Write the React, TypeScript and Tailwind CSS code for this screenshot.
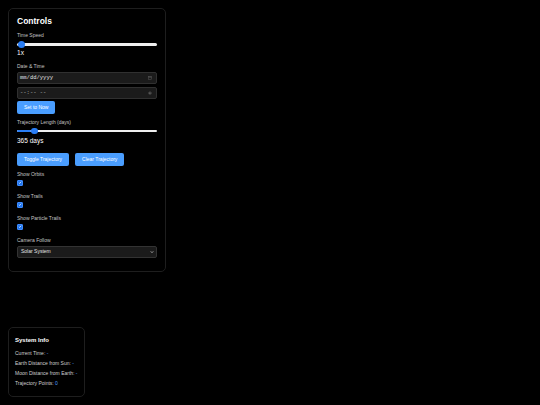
import React, { useState } from 'react';

const font = { fontFamily: '"Liberation Sans", Arial, sans-serif' };

function Slider({ pct }: { pct: number }) {
  return (
    <div className="relative h-[6.5px] w-full">
      <div className="absolute left-0 right-0 top-[2px] h-[2.5px] rounded-full bg-[#efefef]" />
      <div className="absolute left-0 top-[2px] h-[2.5px] rounded-full bg-[#2a7ef5]" style={{ width: `${pct}%` }} />
      <div
        className="absolute top-0 h-[6.5px] w-[6.5px] rounded-full bg-[#2a7ef5]"
        style={{ left: `calc(${pct}% * 0.955 + 1px)` }}
      />
    </div>
  );
}

function Label({ children }: { children: React.ReactNode }) {
  return <div className="text-[5px] leading-none text-[#c4c4c4]">{children}</div>;
}

function Check() {
  return (
    <div className="flex h-[6px] w-[6px] items-center justify-center rounded-[1px] border-[0.5px] border-[#3d8bff] bg-[#1f74ec]">
      <svg viewBox="0 0 10 10" className="h-[5px] w-[5px]">
        <path d="M2 5.2 L4.2 7.3 L8 2.8" fill="none" stroke="#fff" strokeWidth="1.8" />
      </svg>
    </div>
  );
}

function Btn({ children }: { children: React.ReactNode }) {
  return (
    <button className="h-[13px] rounded-[2px] bg-[#4a9eff] px-[7px] text-[5px] leading-none text-white">
      {children}
    </button>
  );
}

export default function App() {
  const [speed] = useState(1);
  const [days] = useState(365);

  return (
    <div className="relative h-[405px] w-[540px] overflow-hidden bg-black text-white" style={font}>
      {/* controls overlay */}
      <div className="absolute left-[8px] top-[8px] flex w-[158px] flex-col rounded-[5px] border border-[#1e1e1e] bg-black/80 px-[8px] pb-[13px] pt-[8px]">
        <div className="text-[8.5px] font-bold leading-none">Controls</div>

        <div className="mt-[7px]">
          <Label>Time Speed</Label>
        </div>
        <div className="mt-[3.5px]">
          <Slider pct={0} />
        </div>
        <div className="mt-[2px] text-[6.5px] leading-none">{speed}x</div>

        <div className="mt-[8px]">
          <Label>Date &amp; Time</Label>
        </div>
        <div className="mt-[2.5px] flex h-[12px] items-center justify-between rounded-[2px] border border-[#303030] bg-[#1b1b1b] pl-[2px] pr-[4px]">
          <span className="text-[5.5px] leading-none text-[#e0e0e0]" style={{ fontFamily: '"Liberation Mono", monospace' }}>
            mm/dd/yyyy
          </span>
          <svg viewBox="0 0 10 10" className="h-[4px] w-[4px]">
            <rect x="1" y="1.5" width="8" height="7.5" fill="none" stroke="#555" strokeWidth="1.3" />
            <rect x="1" y="1.5" width="8" height="2.2" fill="#555" />
          </svg>
        </div>
        <div className="mt-[3px] flex h-[12px] items-center justify-between rounded-[2px] border border-[#303030] bg-[#1b1b1b] pl-[2px] pr-[4px]">
          <span className="text-[5.5px] leading-none text-[#bdbdbd]" style={{ fontFamily: '"Liberation Mono", monospace' }}>
            --:-- --
          </span>
          <svg viewBox="0 0 10 10" className="h-[4px] w-[4px]">
            <circle cx="5" cy="5" r="4" fill="#555" />
            <path d="M5 2.5 V5 H7" fill="none" stroke="#1b1b1b" strokeWidth="1" />
          </svg>
        </div>
        <div className="mt-[2px] flex">
          <Btn>Set to Now</Btn>
        </div>

        <div className="mt-[6.5px]">
          <Label>Trajectory Length (days)</Label>
        </div>
        <div className="mt-[2.5px]">
          <Slider pct={10} />
        </div>
        <div className="mt-[3.5px] text-[6.5px] leading-none">{days} days</div>

        <div className="mt-[8.5px] flex gap-[6px]">
          <Btn>Toggle Trajectory</Btn>
          <Btn>Clear Trajectory</Btn>
        </div>

        {['Show Orbits', 'Show Trails', 'Show Particle Trails'].map((t, i) => (
          <div key={t} className={i === 0 ? 'mt-[6.5px]' : 'mt-[8.5px]'}>
            <Label>{t}</Label>
            <div className="mt-[2.5px]">
              <Check />
            </div>
          </div>
        ))}

        <div className="mt-[8.5px]">
          <Label>Camera Follow</Label>
        </div>
        <div className="mt-[2.5px] flex h-[12px] items-center justify-between rounded-[2px] border border-[#333] bg-[#1b1b1b] pl-[3px] pr-[2px]">
          <span className="text-[5px] leading-none text-[#e6e6e6]">Solar System</span>
          <svg viewBox="0 0 10 10" className="h-[4px] w-[4px]">
            <path d="M2 3.5 L5 6.5 L8 3.5" fill="none" stroke="#fff" strokeWidth="1.6" />
          </svg>
        </div>
      </div>

      {/* system info overlay */}
      <div className="absolute left-[8px] top-[327px] flex h-[70px] w-[77px] flex-col rounded-[5px] border border-[#1e1e1e] bg-black/80 px-[6px] pt-[9px]">
        <div className="text-[6px] font-bold leading-none">System Info</div>
        <div className="mt-[7.5px] flex flex-col gap-[5px] text-[5px] leading-none text-[#cfcfcf]">
          <div>
            Current Time: <span className="text-[#4a9eff]">-</span>
          </div>
          <div>
            Earth Distance from Sun: <span className="text-[#4a9eff]">-</span>
          </div>
          <div>
            Moon Distance from Earth: <span className="text-[#4a9eff]">-</span>
          </div>
          <div>
            Trajectory Points: <span className="text-[#4a9eff]">0</span>
          </div>
        </div>
      </div>
    </div>
  );
}
